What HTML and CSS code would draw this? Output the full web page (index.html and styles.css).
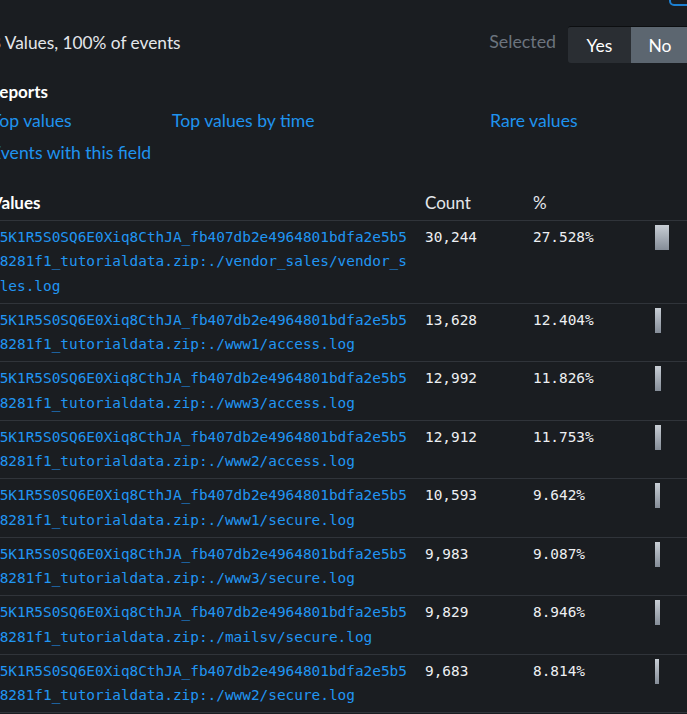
FILE: index.html
```html
<!DOCTYPE html>
<html>
<head>
<meta charset="utf-8">
<link rel="stylesheet" href="styles.css">
</head>
<body>
<div class="focus-ring"></div>
<div class="panel">
  <div class="topbar">
    <div class="title">8 Values, 100% of events</div>
    <div class="selected">
      <span class="sel-label">Selected</span>
      <div class="toggle">
        <span class="btn btn-yes">Yes</span>
        <span class="btn btn-no">No</span>
      </div>
    </div>
  </div>

  <div class="reports">
    <div class="reports-title">Reports</div>
    <div class="links">
      <a class="link">Top values</a>
      <a class="link">Top values by time</a>
      <a class="link">Rare values</a>
      <a class="link">Events with this field</a>
    </div>
  </div>

  <div class="table">
    <div class="row head">
      <div class="cell">Values</div>
      <div class="cell">Count</div>
      <div class="cell">%</div>
      <div class="cell"></div>
    </div>
    <div class="row">
      <div class="cell val">H5K1R5S0SQ6E0Xiq8CthJA_fb407db2e4964801bdfa2e5b5e8281f1_tutorialdata.zip:./vendor_sales/vendor_sales.log</div>
      <div class="cell num">30,244</div>
      <div class="cell num">27.528%</div>
      <div class="cell"><div class="bar" style="width:13.8px"></div></div>
    </div>
    <div class="row">
      <div class="cell val">H5K1R5S0SQ6E0Xiq8CthJA_fb407db2e4964801bdfa2e5b5e8281f1_tutorialdata.zip:./www1/access.log</div>
      <div class="cell num">13,628</div>
      <div class="cell num">12.404%</div>
      <div class="cell"><div class="bar" style="width:6.2px"></div></div>
    </div>
    <div class="row">
      <div class="cell val">H5K1R5S0SQ6E0Xiq8CthJA_fb407db2e4964801bdfa2e5b5e8281f1_tutorialdata.zip:./www3/access.log</div>
      <div class="cell num">12,992</div>
      <div class="cell num">11.826%</div>
      <div class="cell"><div class="bar" style="width:5.9px"></div></div>
    </div>
    <div class="row">
      <div class="cell val">H5K1R5S0SQ6E0Xiq8CthJA_fb407db2e4964801bdfa2e5b5e8281f1_tutorialdata.zip:./www2/access.log</div>
      <div class="cell num">12,912</div>
      <div class="cell num">11.753%</div>
      <div class="cell"><div class="bar" style="width:5.9px"></div></div>
    </div>
    <div class="row">
      <div class="cell val">H5K1R5S0SQ6E0Xiq8CthJA_fb407db2e4964801bdfa2e5b5e8281f1_tutorialdata.zip:./www1/secure.log</div>
      <div class="cell num">10,593</div>
      <div class="cell num">9.642%</div>
      <div class="cell"><div class="bar" style="width:4.8px"></div></div>
    </div>
    <div class="row">
      <div class="cell val">H5K1R5S0SQ6E0Xiq8CthJA_fb407db2e4964801bdfa2e5b5e8281f1_tutorialdata.zip:./www3/secure.log</div>
      <div class="cell num">9,983</div>
      <div class="cell num">9.087%</div>
      <div class="cell"><div class="bar" style="width:4.5px"></div></div>
    </div>
    <div class="row">
      <div class="cell val">H5K1R5S0SQ6E0Xiq8CthJA_fb407db2e4964801bdfa2e5b5e8281f1_tutorialdata.zip:./mailsv/secure.log</div>
      <div class="cell num">9,829</div>
      <div class="cell num">8.946%</div>
      <div class="cell"><div class="bar" style="width:4.5px"></div></div>
    </div>
    <div class="row">
      <div class="cell val">H5K1R5S0SQ6E0Xiq8CthJA_fb407db2e4964801bdfa2e5b5e8281f1_tutorialdata.zip:./www2/secure.log</div>
      <div class="cell num">9,683</div>
      <div class="cell num">8.814%</div>
      <div class="cell"><div class="bar" style="width:4.4px"></div></div>
    </div>
  </div>
</div>
</body>
</html>
```
FILE: styles.css
```css
html, body {
  margin: 0;
  padding: 0;
  background: #1a1d21;
  overflow: hidden;
}
body {
  width: 687px;
  height: 714px;
  position: relative;
  font-family: Lato, "Open Sans", sans-serif;
  color: #e4e7eb;
}
.focus-ring {
  position: absolute;
  left: 669px;
  top: -22px;
  width: 40px;
  height: 24px;
  border: 2px solid #1c7fd0;
  border-radius: 5px;
}
.panel {
  margin-left: -9px;
  width: 698px;
}
.topbar {
  display: flex;
  justify-content: space-between;
  align-items: center;
  padding-top: 26px;
  height: 37px;
}
.title {
  font-size: 17.3px;
  margin-top: -5px;
}
.selected {
  display: flex;
  align-items: center;
}
.sel-label {
  color: #6c747e;
  font-size: 17.8px;
  margin-right: 12px;
  margin-top: -7px;
}
.toggle {
  display: flex;
  height: 37px;
  border-radius: 3px;
  overflow: hidden;
  border-top: 1px solid #0c0e10;
  box-sizing: border-box;
}
.btn {
  display: flex;
  align-items: center;
  justify-content: center;
  font-size: 17.5px;
  color: #ffffff;
}
.btn-yes {
  width: 63px;
  background: #2a2e33;
}
.btn-no {
  width: 58px;
  background: #5c6670;
}
.reports {
  padding-top: 18px;
}
.reports-title {
  font-weight: 700;
  font-size: 17px;
  line-height: 22px;
  color: #ffffff;
  margin-left: -2px;
}
.links {
  display: grid;
  grid-template-columns: 181px 318px auto;
  row-gap: 10px;
  margin-top: 7px;
}
.link {
  font-size: 17.6px;
  line-height: 22px;
  color: #1f93ee;
}
.table {
  margin-top: 27px;
}
.row {
  display: grid;
  grid-template-columns: 434px 108px 122px auto;
  border-bottom: 1px solid #30343a;
  padding: 4px 0 4.5px;
}
.head {
  padding: 0 0 4px;
  font-size: 17px;
  line-height: 24px;
}
.head .cell:first-child {
  font-weight: 700;
  color: #ffffff;
}
.cell {
  line-height: 24.5px;
}
.val {
  font-family: "DejaVu Sans Mono", monospace;
  font-size: 14.4px;
  color: #2196f3;
  word-break: break-all;
  padding-right: 16px;
}
.num {
  font-family: "DejaVu Sans Mono", monospace;
  font-size: 14.4px;
  color: #eef0f3;
}
.bar {
  height: 25px;
  background: linear-gradient(#c8ced5, #858d98);
}
```
